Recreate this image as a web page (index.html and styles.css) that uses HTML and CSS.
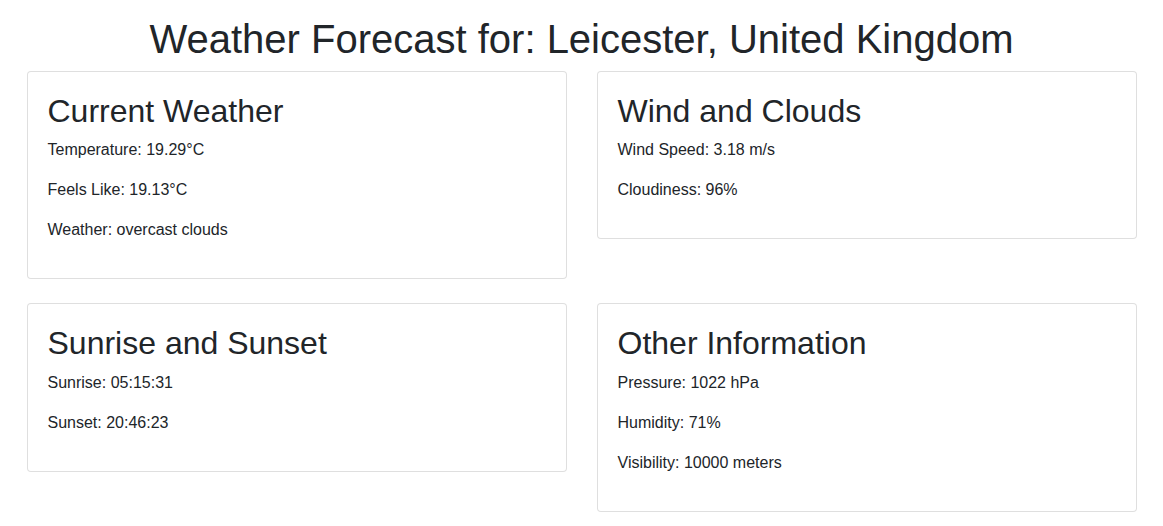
FILE: index.html
```html
<!DOCTYPE html>
<html lang="en">
<head>
<meta charset="utf-8">
<title>Weather Forecast</title>
<link rel="stylesheet" href="styles.css">
</head>
<body>
<div class="container">
  <h1 class="page-title">Weather Forecast for: Leicester, United Kingdom</h1>
  <div class="grid">
    <div class="card">
      <h2 class="card-title">Current Weather</h2>
      <p>Temperature: 19.29°C</p>
      <p>Feels Like: 19.13°C</p>
      <p>Weather: overcast clouds</p>
    </div>
    <div class="card">
      <h2 class="card-title">Wind and Clouds</h2>
      <p>Wind Speed: 3.18 m/s</p>
      <p>Cloudiness: 96%</p>
    </div>
    <div class="card">
      <h2 class="card-title">Sunrise and Sunset</h2>
      <p>Sunrise: 05:15:31</p>
      <p>Sunset: 20:46:23</p>
    </div>
    <div class="card">
      <h2 class="card-title">Other Information</h2>
      <p>Pressure: 1022 hPa</p>
      <p>Humidity: 71%</p>
      <p>Visibility: 10000 meters</p>
    </div>
  </div>
</div>
</body>
</html>
```
FILE: styles.css
```css
* { box-sizing: border-box; }
html, body {
  margin: 0;
  background: #fff;
}
body {
  font-family: "Liberation Sans", Arial, sans-serif;
  font-size: 16px;
  line-height: 1.5;
  color: #212529;
}
.container {
  width: 1140px;
  margin: 0 auto;
  padding: 0 15px;
}
.page-title {
  margin: 15px 0 8px;
  font-size: 40px;
  font-weight: 500;
  line-height: 1.2;
  text-align: center;
}
.grid {
  display: grid;
  grid-template-columns: 540px 540px;
  column-gap: 30px;
  row-gap: 24px;
  align-items: start;
}
.card {
  border: 1px solid rgba(0, 0, 0, 0.125);
  border-radius: 4px;
  padding: 20px;
  background: #fff;
}
.card-title {
  margin: 0 0 8px;
  font-size: 32px;
  font-weight: 500;
  line-height: 1.2;
}
.card p {
  margin: 0 0 16px;
}
```
